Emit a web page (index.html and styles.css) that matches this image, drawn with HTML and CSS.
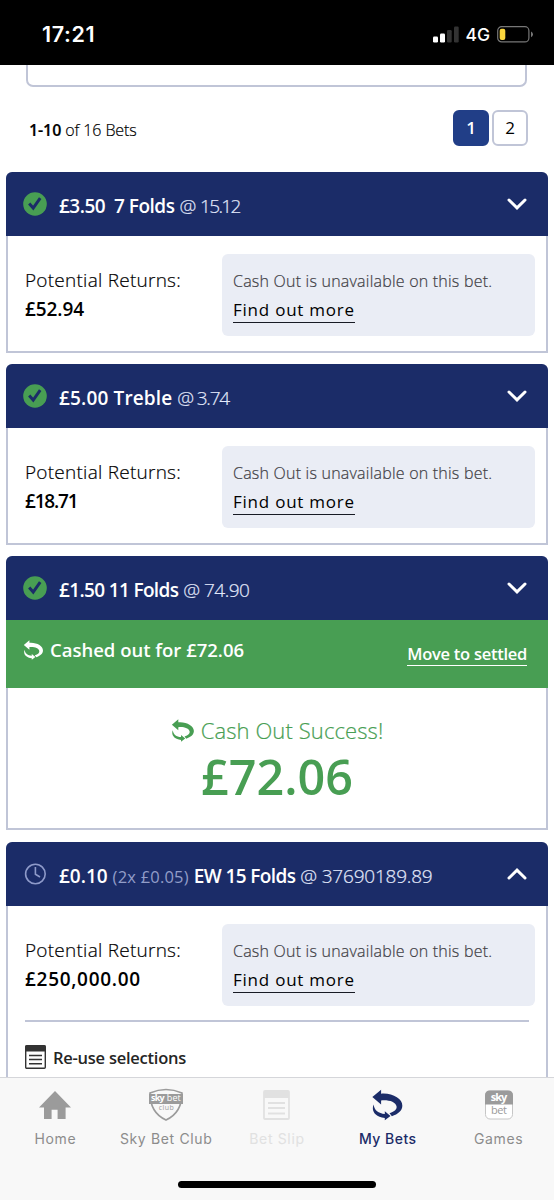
FILE: index.html
```html
<!DOCTYPE html>
<html lang="en">
<head>
    <meta charset="UTF-8">
    <meta name="viewport" content="width=device-width, initial-scale=1.0">
    <title>My Bets</title>
    <link rel="stylesheet" href="styles.css">
</head>
<body>
    <!-- Shared icons -->
    <svg class="icon-defs" width="0" height="0">
        <symbol id="cashout" viewBox="0 0 92 93">
            <path d="M1 23L27 1V13C60 10 91 28 90 49C90 64 77 74 59 80L52 71C68 66 74 59 73 51C70 37 50 31 27 33V45Z"/>
            <path d="M5 45C-3 62 8 82 38 85V92L55 79L38 65V73C20 72 6 62 5 45Z"/>
        </symbol>
        <symbol id="tick" viewBox="0 0 24 24">
            <circle cx="12" cy="12" r="11.8" fill="#489e53"/>
            <path d="M6.2 11.6L10.2 16L17.2 6.2" fill="none" stroke="#1b2c68" stroke-width="3"/>
        </symbol>
        <symbol id="chevron" viewBox="0 0 20 12">
            <path d="M2 2L10 9.8L18 2" fill="none" stroke="#fff" stroke-width="3" stroke-linecap="round"/>
        </symbol>
        <symbol id="slip" viewBox="0 0 21 24">
            <rect x=".7" y=".7" width="19.6" height="22.6" rx="1" fill="none" stroke="currentColor" stroke-width="1.4"/>
            <path d="M.5.5H20.5V6.5H.5Z" fill="currentColor"/>
            <path d="M4 10.5H17M4 14.5H17M4 18.7H17" stroke="currentColor" stroke-width="1.4"/>
        </symbol>
    </svg>

    <div class="screen">
        <header class="status-bar">
            <span class="time">17:21</span>
            <svg class="signal" width="26" height="17" viewBox="0 0 26 17">
                <rect x="0" y="10.5" width="5" height="6" rx="1.2" fill="#fff"/>
                <rect x="7" y="7.5" width="5" height="9" rx="1.2" fill="#fff"/>
                <rect x="14" y="4" width="4.7" height="12.5" rx="1.2" fill="#333"/>
                <rect x="21" y="0.5" width="4.7" height="16" rx="1.2" fill="#333"/>
            </svg>
            <span class="network">4G</span>
            <svg class="battery" width="37" height="17" viewBox="0 0 37 17">
                <rect x=".7" y=".7" width="31.2" height="15.2" rx="4" fill="none" stroke="#777" stroke-width="1.2"/>
                <rect x="2.7" y="2.7" width="5.6" height="11.3" rx="2" fill="#fbd63d"/>
                <path d="M34 5.5Q36 6.5 36 8.3T34 11.2Z" fill="#777"/>
            </svg>
        </header>

        <main class="content">
            <div class="filter-box"></div>

            <div class="pagination">
                <p class="count"><b>1-10</b> of 16 Bets</p>
                <a class="page active">1</a>
                <a class="page">2</a>
            </div>

            <section class="bet">
                <div class="bet-header">
                    <svg class="status-icon"><use href="#tick"/></svg>
                    <h2 class="bet-title t1"><b>£3.50&nbsp; 7 Folds</b> <span class="odds">@ 15.12</span></h2>
                    <svg class="chevron"><use href="#chevron"/></svg>
                </div>
                <div class="bet-body">
                    <div class="returns">
                        <p class="label">Potential Returns:</p>
                        <p class="amount">£52.94</p>
                    </div>
                    <div class="notice">
                        <p>Cash Out is unavailable on this bet.</p>
                        <a class="more">Find out more</a>
                    </div>
                </div>
            </section>

            <section class="bet">
                <div class="bet-header">
                    <svg class="status-icon"><use href="#tick"/></svg>
                    <h2 class="bet-title t2"><b>£5.00 Treble</b> <span class="odds">@ 3.74</span></h2>
                    <svg class="chevron"><use href="#chevron"/></svg>
                </div>
                <div class="bet-body">
                    <div class="returns">
                        <p class="label">Potential Returns:</p>
                        <p class="amount a2">£18.71</p>
                    </div>
                    <div class="notice">
                        <p>Cash Out is unavailable on this bet.</p>
                        <a class="more">Find out more</a>
                    </div>
                </div>
            </section>

            <section class="bet cashed">
                <div class="bet-header">
                    <svg class="status-icon"><use href="#tick"/></svg>
                    <h2 class="bet-title t3"><b>£1.50 11 Folds</b> <span class="odds">@ 74.90</span></h2>
                    <svg class="chevron"><use href="#chevron"/></svg>
                </div>
                <div class="cashed-bar">
                    <svg class="cashout-icon"><use href="#cashout"/></svg>
                    <span class="cashed-text">Cashed out for £72.06</span>
                    <a class="settle">Move to settled</a>
                </div>
                <div class="success">
                    <p class="success-title"><svg class="cashout-icon large"><use href="#cashout"/></svg><span>Cash Out Success!</span></p>
                    <p class="success-amount">£72.06</p>
                </div>
            </section>

            <section class="bet open">
                <div class="bet-header">
                    <svg class="status-icon" viewBox="0 0 24 24">
                        <circle cx="12.4" cy="12" r="9.8" fill="none" stroke="#8e9ac9" stroke-width="1.6"/>
                        <path d="M12.4 5V12.2L17 15" fill="none" stroke="#8e9ac9" stroke-width="1.6"/>
                    </svg>
                    <h2 class="bet-title t4"><b>£0.10</b> <span class="stake">(2x £0.05)</span> <b class="ew">EW 15 Folds</b> <span class="odds">@ 37690189.89</span></h2>
                    <svg class="chevron up"><use href="#chevron"/></svg>
                </div>
                <div class="bet-body">
                    <div class="returns">
                        <p class="label">Potential Returns:</p>
                        <p class="amount a4">£250,000.00</p>
                    </div>
                    <div class="notice">
                        <p>Cash Out is unavailable on this bet.</p>
                        <a class="more">Find out more</a>
                    </div>
                </div>
                <div class="reuse">
                    <svg class="slip-icon"><use href="#slip"/></svg>
                    <span>Re-use selections</span>
                </div>
            </section>
        </main>

        <footer class="footer">
            <nav class="tabs">
                <a class="tab">
                    <svg width="32" height="32" viewBox="0 0 32 32"><path d="M16 2L0 18.6H5V30H12.6V20.8H18.6V30H26.6V18.6H32Z" fill="#9b9b9b"/></svg>
                    <span>Home</span>
                </a>
                <a class="tab">
                    <svg width="36" height="34" viewBox="0 0 36 34">
                        <path d="M2 5Q18 -2 34 5C34 18 29 27 18 32C7 27 2 18 2 5Z" fill="#f8f8f8" stroke="#9b9b9b" stroke-width="1.7"/>
                        <rect x="1" y="6" width="34" height="10" fill="#9b9b9b"/>
                        <text class="club-sky" x="3" y="13.2" textLength="13.5">sky</text>
                        <text class="club-bet" x="18.8" y="13.2" textLength="14">bet</text>
                        <text class="club-club" x="10.7" y="22.2" textLength="15">club</text>
                    </svg>
                    <span>Sky Bet Club</span>
                </a>
                <a class="tab disabled">
                    <svg width="27" height="30" viewBox="0 0 27 30">
                        <rect x="1" y="1" width="25" height="28" rx="1" fill="none" stroke="currentColor" stroke-width="1.8"/>
                        <path d="M1 1H26V8H1Z" fill="currentColor"/>
                        <path d="M5 13H22M5 18H22M5 23.5H22" stroke="currentColor" stroke-width="1.8"/>
                    </svg>
                    <span>Bet Slip</span>
                </a>
                <a class="tab current">
                    <svg width="31" height="31" fill="#1b2c68"><use href="#cashout"/></svg>
                    <span>My Bets</span>
                </a>
                <a class="tab">
                    <svg width="30" height="32" viewBox="0 0 30 32">
                        <rect x="1.5" y="2" width="27" height="28" rx="4.5" fill="#fff" stroke="#c6c6c6"/>
                        <path d="M1 15.6V6.5Q1 1.5 6 1.5H24Q29 1.5 29 6.5V15.6Z" fill="#9b9b9b"/>
                        <text class="games-sky" x="6.8" y="11.8" textLength="16.5">sky</text>
                        <text class="games-bet" x="7" y="25.4" textLength="16">bet</text>
                    </svg>
                    <span>Games</span>
                </a>
            </nav>
            <div class="home-indicator"></div>
        </footer>
    </div>
</body>
</html>
```

FILE: styles.css
```css
:root {
    --navy: #1b2c68;
    --green: #489e53;
    --border: #c0c5d7;
    --panel: #eaedf5;
}

* {
    box-sizing: border-box;
}

body {
    margin: 0;
    background: #fff;
    color: #000;
    font-family: "Open Sans", "Noto Sans", sans-serif;
}

p, h2 {
    margin: 0;
    font-weight: normal;
}

b {
    font-weight: 600;
}

svg {
    flex: none;
}

.icon-defs {
    position: absolute;
}

.screen {
    display: flex;
    flex-direction: column;
    height: 1200px;
    overflow: hidden;
}

/* Status bar */
.status-bar {
    display: flex;
    flex: none;
    align-items: center;
    height: 65px;
    padding: 3px 20px 0 42px;
    background: #000;
    color: #fff;
    font-family: Inter, sans-serif;
}

.time {
    margin-right: auto;
    font-size: 21.5px;
    font-weight: 600;
    letter-spacing: 0.6px;
}

.network {
    margin: 0 7px 0 6px;
    font-size: 17.5px;
    font-weight: 500;
}

.content {
    flex: 1;
    min-height: 0;
    overflow: hidden;
    padding: 0 6px;
}

.filter-box {
    height: 22px;
    margin: 0 21px 0 20px;
    border: 2px solid var(--border);
    border-top: 0;
    border-radius: 0 0 7px 7px;
}

/* Pagination */
.pagination {
    display: flex;
    align-items: center;
    gap: 3px;
    height: 36px;
    margin: 23px 20px 26px 23px;
}

.count {
    margin-right: auto;
    padding-top: 3px;
    font-size: 16px;
    font-weight: 300;
    letter-spacing: -0.1px;
    -webkit-text-stroke: 0.2px;
}

.page {
    width: 36px;
    height: 36px;
    border: 2px solid var(--border);
    border-radius: 6px;
    font-size: 17px;
    line-height: 32px;
    text-align: center;
}

.page.active {
    background: #213e87;
    border-color: #213e87;
    color: #fff;
    font-weight: 600;
}

/* Bets */
.bet {
    margin-bottom: 11px;
    border: 2px solid var(--border);
    border-top: 0;
    border-radius: 7px 7px 0 0;
}

.bet.cashed {
    margin-bottom: 12px;
}

.bet-header {
    display: flex;
    align-items: center;
    height: 64px;
    margin: 0 -2px;
    padding: 0 21px 0 17px;
    border-radius: 6px 6px 0 0;
    background: var(--navy);
    color: #fff;
}

.status-icon {
    width: 24px;
    height: 24px;
}

.bet-title {
    margin-left: 12px;
    padding-top: 3px;
    font-size: 19px;
    white-space: nowrap;
}

.odds {
    color: #e3e9fb;
    font-weight: 300;
    letter-spacing: -0.2px;
    -webkit-text-stroke: 0.2px;
}

.t1 b {
    letter-spacing: -0.5px;
}

.t1 .odds {
    letter-spacing: -1.6px;
    word-spacing: 2px;
}

.t2 b {
    letter-spacing: 0.15px;
}

.t2 .odds {
    letter-spacing: -1.2px;
}

.t3 b {
    letter-spacing: -0.65px;
}

.t3 .odds {
    letter-spacing: -0.5px;
}

.t4 .ew {
    letter-spacing: -0.6px;
}

.stake {
    color: #929dc8;
    font-size: 16.5px;
    letter-spacing: 0.2px;
}

.chevron {
    width: 20px;
    height: 12px;
    margin-left: auto;
}

.chevron.up {
    transform: rotate(180deg);
}

.bet-body {
    display: flex;
    height: 115px;
    padding: 18px 11px 0 17px;
}

.returns {
    width: 197px;
    padding-top: 12px;
}

.label {
    font-size: 19px;
    font-weight: 300;
    line-height: 28px;
    letter-spacing: 0.25px;
    -webkit-text-stroke: 0.2px;
}

.amount {
    font-size: 19px;
    font-weight: 600;
    line-height: 31px;
    letter-spacing: -0.1px;
}

.a2 {
    letter-spacing: -1.2px;
}

.a4 {
    letter-spacing: 0.7px;
}

.notice {
    flex: 1;
    height: 82px;
    padding: 14px 0 0 11px;
    border-radius: 6px;
    background: var(--panel);
    white-space: nowrap;
}

.notice p {
    color: #3f4045;
    font-size: 16px;
    font-weight: 300;
    line-height: 26px;
    letter-spacing: 0.22px;
    -webkit-text-stroke: 0.2px;
}

.more {
    display: inline-block;
    margin-top: 4px;
    border-bottom: 1.5px solid #171a24;
    font-size: 17px;
    line-height: 24px;
    letter-spacing: 0.77px;
}

/* Cashed out bet */
.cashed-bar {
    display: flex;
    height: 68px;
    margin: 0 -2px;
    padding: 20px 21px 0 17px;
    background: var(--green);
    color: #fff;
}

.cashout-icon {
    width: 21px;
    height: 20px;
    fill: currentColor;
}

.cashed-text {
    margin-left: 6px;
    font-size: 18.5px;
    font-weight: 600;
    line-height: 20px;
}

.settle {
    height: 26px;
    margin-left: auto;
    border-bottom: 1.5px solid #fff;
    font-size: 16.5px;
    font-weight: 600;
    line-height: 28px;
    letter-spacing: -0.27px;
}

.success {
    height: 140px;
    padding-top: 28px;
    color: var(--green);
    text-align: center;
}

.success-title {
    display: flex;
    align-items: center;
    justify-content: center;
    height: 28px;
    font-size: 22px;
    font-weight: 300;
    letter-spacing: 0.1px;
    -webkit-text-stroke: 0.2px;
}

.cashout-icon.large {
    width: 24px;
    height: 23px;
    margin-right: 6px;
}

.success-amount {
    font-size: 48.5px;
    font-weight: 600;
    line-height: 64px;
}

.reuse {
    display: flex;
    align-items: center;
    height: 72px;
    margin: 0 17px;
    border-top: 2px solid var(--border);
    color: #252525;
    font-size: 16.5px;
    font-weight: 600;
    letter-spacing: -0.25px;
}

.open .bet-body {
    height: 114px;
}

.slip-icon {
    width: 21px;
    height: 24px;
    margin-right: 7px;
    color: #333;
}

/* Bottom tabs */
.footer {
    flex: none;
    height: 123px;
    border-top: 1px solid #d5d6da;
    background: #f8f8f8;
}

.tabs {
    display: flex;
    height: 103px;
}

.tab {
    display: flex;
    flex: 1;
    flex-direction: column;
    align-items: center;
    padding-top: 10px;
    color: #8c8c8c;
    font-family: Inter, sans-serif;
    font-size: 14px;
    letter-spacing: 0.65px;
    white-space: nowrap;
}

.tab svg {
    height: 34px;
    letter-spacing: 0;
}

.tab span {
    margin-top: 8px;
    line-height: 18px;
}

.tab.disabled {
    color: #e1e1e1;
}

.tab.current {
    color: var(--navy);
    font-weight: 500;
    letter-spacing: 0.5px;
}

.club-sky, .club-bet, .club-club, .games-sky, .games-bet {
    font-family: "Open Sans", sans-serif;
    font-size: 9px;
    fill: #fff;
}

.club-sky, .games-sky {
    font-weight: 700;
}

.club-club {
    fill: #9b9b9b;
    font-size: 7px;
}

.games-sky, .games-bet {
    font-size: 11px;
}

.games-bet {
    fill: #9b9b9b;
}

.home-indicator {
    width: 198px;
    height: 7px;
    margin: 0 auto;
    border-radius: 4px;
    background: #000;
}
```
